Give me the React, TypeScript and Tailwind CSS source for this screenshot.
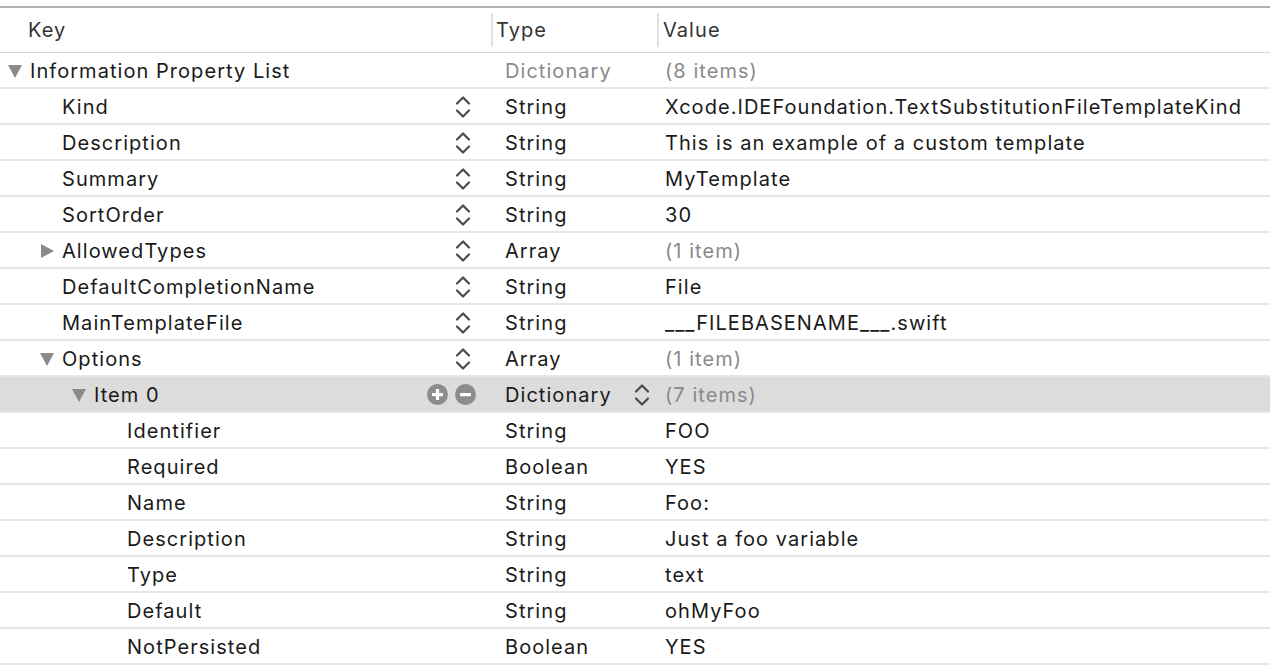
import React from "react";

type Row = {
  key: string;
  level: number;
  toggle?: "open" | "closed";
  type: string;
  value: string;
  muted?: boolean;
  stepper?: boolean;
  selected?: boolean;
};

const rows: Row[] = [
  { key: "Information Property List", level: 0, toggle: "open", type: "Dictionary", value: "(8 items)", muted: true },
  { key: "Kind", level: 1, type: "String", value: "Xcode.IDEFoundation.TextSubstitutionFileTemplateKind", stepper: true },
  { key: "Description", level: 1, type: "String", value: "This is an example of a custom template", stepper: true },
  { key: "Summary", level: 1, type: "String", value: "MyTemplate", stepper: true },
  { key: "SortOrder", level: 1, type: "String", value: "30", stepper: true },
  { key: "AllowedTypes", level: 1, toggle: "closed", type: "Array", value: "(1 item)", muted: true, stepper: true },
  { key: "DefaultCompletionName", level: 1, type: "String", value: "File", stepper: true },
  { key: "MainTemplateFile", level: 1, type: "String", value: "___FILEBASENAME___.swift", stepper: true },
  { key: "Options", level: 1, toggle: "open", type: "Array", value: "(1 item)", muted: true, stepper: true },
  { key: "Item 0", level: 2, toggle: "open", type: "Dictionary", value: "(7 items)", muted: true, selected: true },
  { key: "Identifier", level: 3, type: "String", value: "FOO" },
  { key: "Required", level: 3, type: "Boolean", value: "YES" },
  { key: "Name", level: 3, type: "String", value: "Foo:" },
  { key: "Description", level: 3, type: "String", value: "Just a foo variable" },
  { key: "Type", level: 3, type: "String", value: "text" },
  { key: "Default", level: 3, type: "String", value: "ohMyFoo" },
  { key: "NotPersisted", level: 3, type: "Boolean", value: "YES" },
];

// key column indent per nesting level
const indent = ["pl-[7px]", "pl-[39px]", "pl-[71px]", "pl-[104px]"];

function Stepper() {
  return (
    <svg width="16" height="24" viewBox="0 0 16 24" fill="none" stroke="#4a4a4a" strokeWidth="2.2" strokeLinecap="round" strokeLinejoin="round">
      <path d="M2 8.5 L8 2.5 L14 8.5" />
      <path d="M2 15.5 L8 21.5 L14 15.5" />
    </svg>
  );
}

function Disclosure({ open }: { open: boolean }) {
  return (
    <svg width="16" height="16" viewBox="0 0 16 16" className="shrink-0">
      {open ? <path d="M1 2 H15 L8 15 Z" fill="#8a8a8a" /> : <path d="M2 1 V15 L15 8 Z" fill="#8a8a8a" />}
    </svg>
  );
}

function RoundButton({ plus }: { plus?: boolean }) {
  return (
    <svg width="21" height="21" viewBox="0 0 21 21">
      <circle cx="10.5" cy="10.5" r="10.5" fill="#8c8c8c" />
      <rect x="5" y="9" width="11" height="3.2" rx="0.6" fill="#ffffff" />
      {plus && <rect x="8.9" y="5" width="3.2" height="11" rx="0.6" fill="#ffffff" />}
    </svg>
  );
}

export default function App() {
  return (
    <div className="h-[670px] w-[1270px] overflow-hidden bg-white pt-[6px] font-['Inter','Noto_Sans',sans-serif] text-[20px] tracking-[1.05px]">
      <div className="border-t-2 border-[#b2b2b2]">
        <div className="grid h-[45px] grid-cols-[491px_166px_1fr] items-center border-b border-[#d6d6d6] text-[#333]">
          <div className="pl-[28px]">Key</div>
          <div className="flex h-[34px] items-center border-l-2 border-[#e2e2e2] pl-[3px]">Type</div>
          <div className="flex h-[34px] items-center border-l-2 border-[#e2e2e2] pl-[4px]">Value</div>
        </div>
        {rows.map((row, i) => (
          <div
            key={i}
            className={`grid h-[36px] grid-cols-[491px_166px_1fr] items-center border-b-2 border-[#e6e6e6] pt-[1px] ${row.selected ? "bg-[#dcdcdc]" : "bg-white"}`}
          >
            <div className={`flex h-full items-center ${indent[row.level]} pr-[15px]`}>
              {row.toggle ? <Disclosure open={row.toggle === "open"} /> : <span className="w-[16px] shrink-0" />}
              <span className="ml-[7px] flex-1 text-[#1a1a1a]">{row.key}</span>
              {row.stepper && (
                <span className="mr-[5px] flex">
                  <Stepper />
                </span>
              )}
              {row.selected && (
                <span className="flex gap-[7px]">
                  <RoundButton plus />
                  <RoundButton />
                </span>
              )}
            </div>
            <div className="flex h-full items-center pl-[14px] pr-[7px]">
              <span className={`flex-1 ${i === 0 ? "text-[#8a8a8a]" : "text-[#1a1a1a]"}`}>{row.type}</span>
              {row.selected && <Stepper />}
            </div>
            <div className={`pl-[8px] ${row.muted ? "text-[#8a8a8a]" : "text-[#1a1a1a]"}`}>{row.value}</div>
          </div>
        ))}
      </div>
    </div>
  );
}
